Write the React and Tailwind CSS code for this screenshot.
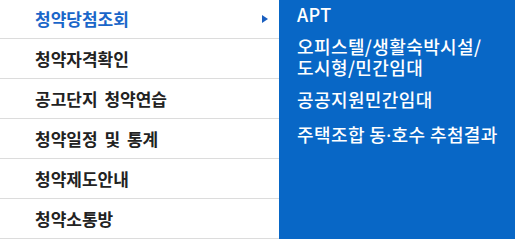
export default function App() {
  const left = ["청약당첨조회", "청약자격확인", "공고단지 청약연습", "청약일정 및 통계", "청약제도안내", "청약소통방"];
  return (
    <div className="flex w-[515px] h-[239px] bg-white overflow-hidden" style={{ fontFamily: '"Noto Sans CJK KR", "Noto Sans", sans-serif' }}>
      <div className="w-[279px] flex flex-col">
        {left.map((t, i) => (
          <div
            key={t}
            className={`flex items-center justify-between pl-[35px] pr-[11px] border-b border-[#dcdcdc] ${i === 0 ? "h-[39px]" : "h-10"}`}
          >
            <span className={`text-[17px] font-bold [word-spacing:3px] ${i === 0 ? "text-[#1a66c9]" : "text-[#222222]"}`}>{t}</span>
            {i === 0 && (
              <svg width="6" height="8" viewBox="0 0 6 8" className="mb-[1px]">
                <path d="M0 0 L6 4 L0 8 Z" fill="#1a5fc0" />
              </svg>
            )}
          </div>
        ))}
      </div>
      <div className="flex-1 bg-[#0867c6] pl-[18px] pt-[4px] flex flex-col gap-[11px] text-white text-[18px] font-medium leading-[21px] tracking-[0.4px]">
        <div>APT</div>
        <div>오피스텔/생활숙박시설/<br />도시형/민간임대</div>
        <div>공공지원민간임대</div>
        <div className="mt-[3px]">주택조합 동<span style={{ fontFamily: '"Noto Sans", sans-serif' }}>·</span>호수 추첨결과</div>
      </div>
    </div>
  );
}
